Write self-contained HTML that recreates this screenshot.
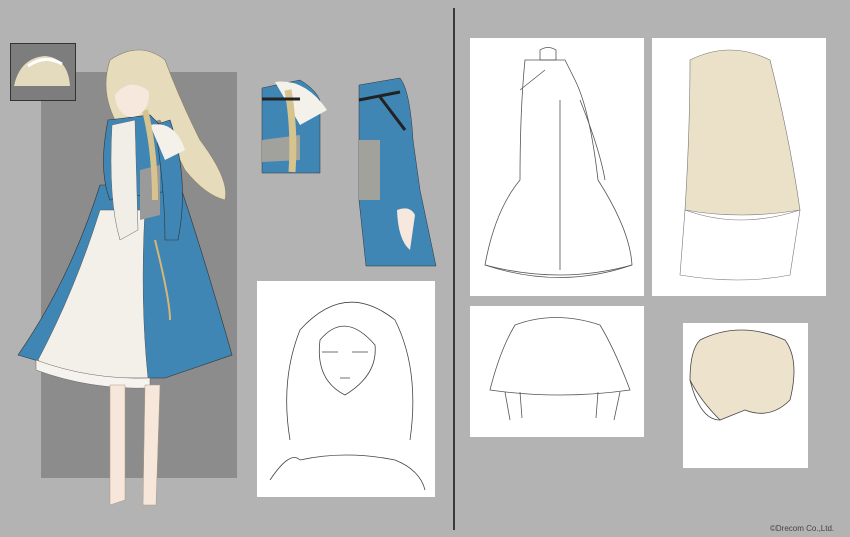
<!DOCTYPE html>
<html><head><meta charset="utf-8"><style>
html,body{margin:0;padding:0;}
body{width:850px;height:537px;background:#b3b3b3;position:relative;overflow:hidden;font-family:"Liberation Sans",sans-serif;}
.a{position:absolute;}
</style></head><body>
<div class="a" style="left:41px;top:72px;width:196px;height:406px;background:#8c8c8c"></div>
<div class="a" style="left:10px;top:43px;width:64px;height:56px;background:#7d7d7d;border:1px solid #333"></div>
<div class="a" style="left:453px;top:8px;width:2px;height:522px;background:#3a3a3a"></div>
<div class="a" style="left:257px;top:281px;width:178px;height:216px;background:#fff"></div>
<div class="a" style="left:470px;top:38px;width:174px;height:258px;background:#fff"></div>
<div class="a" style="left:652px;top:38px;width:174px;height:258px;background:#fff"></div>
<div class="a" style="left:470px;top:306px;width:174px;height:131px;background:#fff"></div>
<div class="a" style="left:683px;top:323px;width:125px;height:145px;background:#fff"></div>
<svg class="a" style="left:0;top:0" width="850" height="537" viewBox="0 0 850 537">
<!-- thumbnail hair -->
<path d="M14 86 Q20 58 45 56 Q68 58 70 86 Z" fill="#e4dbbf"/>
<path d="M28 66 Q45 54 62 64" stroke="#fff" stroke-width="3" fill="none"/>
<!-- main figure hair -->
<path d="M110 60 Q140 40 165 60 Q180 100 200 140 Q230 180 225 200 Q205 195 185 170 L160 120 Q130 130 115 120 Q100 90 110 60Z" fill="#e6dcbc" stroke="#8a7f66" stroke-width=".6"/>
<!-- skirt blue -->
<path d="M100 185 L180 185 Q205 260 232 355 L165 378 L95 378 L18 355 Q70 280 100 185Z" fill="#3f86b5" stroke="#333" stroke-width=".6"/>
<!-- white skirt -->
<path d="M100 210 L145 210 Q140 300 148 378 L95 378 Q50 372 38 360 Q75 290 100 210Z" fill="#f3f0ea" stroke="#555" stroke-width=".5"/>
<path d="M36 360 Q90 380 150 378 L150 388 Q90 390 36 370Z" fill="#f6f3ee" stroke="#666" stroke-width=".5"/>
<!-- torso -->
<path d="M108 120 L150 115 L165 130 L175 190 L110 200 Q98 170 108 120Z" fill="#3f86b5" stroke="#333" stroke-width=".6"/>
<path d="M112 125 L135 120 L138 230 L120 240 Q108 200 112 125Z" fill="#f1eee8" stroke="#666" stroke-width=".5"/>
<path d="M140 170 L160 165 L160 215 L140 220Z" fill="#9a9a9a"/>
<path d="M155 125 L170 120 Q190 180 178 240 L165 240 Q165 190 155 125Z" fill="#3f86b5" stroke="#333" stroke-width=".6"/>
<path d="M150 125 Q175 120 185 150 L165 160Z" fill="#f4f1ea"/>
<!-- braid -->
<path d="M145 110 Q155 150 155 200" stroke="#d7c38e" stroke-width="6" fill="none"/>
<!-- face -->
<ellipse cx="132" cy="95" rx="17" ry="22" fill="#f6e8dc"/>
<path d="M112 80 Q130 50 158 70 L150 92 Q130 76 115 95Z" fill="#e6dcbc"/>
<!-- legs -->
<path d="M110 385 L125 385 L125 500 L110 505Z M145 385 L160 385 L156 505 L143 505Z" fill="#f7e7da" stroke="#aa9888" stroke-width=".5"/>
<path d="M155 240 Q170 300 170 320" stroke="#d7b577" stroke-width="2" fill="none"/>
<!-- crop1 -->
<path d="M262 88 L300 80 Q325 95 320 112 L320 173 L262 173Z" fill="#3f86b5" stroke="#333" stroke-width=".5"/>
<path d="M275 82 Q305 78 327 110 L300 125 Z" fill="#f4f1ea"/>
<path d="M262 140 L300 135 L300 160 L262 162Z" fill="#a2a29c"/>
<path d="M288 90 Q295 130 292 172" stroke="#d7c38e" stroke-width="7" fill="none"/>
<path d="M262 99 L300 99" stroke="#222" stroke-width="3"/>
<!-- crop2 -->
<path d="M359 85 L400 78 Q410 90 413 140 L420 190 L436 266 L366 266 L359 200Z" fill="#3f86b5" stroke="#333" stroke-width=".5"/>
<path d="M359 140 L380 140 L380 200 L359 200Z" fill="#a2a29c"/>
<path d="M359 100 L400 92 M380 97 L405 130" stroke="#222" stroke-width="3"/>
<path d="M397 210 Q410 205 415 215 L410 250 Q398 240 397 210Z" fill="#f6e8dc"/>
<!-- face sketch -->
<g stroke="#444" stroke-width=".8" fill="none">
<path d="M290 440 Q280 380 300 330 Q345 280 395 320 Q420 370 410 440"/>
<path d="M320 340 Q345 310 375 345 Q378 375 345 395 Q315 380 320 340Z"/>
<path d="M322 352 L338 352 M352 352 L368 352 M340 378 L350 378"/>
<path d="M300 460 Q345 450 395 460 M270 480 Q290 450 300 460 M395 460 Q420 470 425 490"/>
</g>
<!-- dress back sketch -->
<g stroke="#555" stroke-width=".8" fill="none">
<path d="M525 60 L565 60 L575 80 Q590 110 598 180 Q630 230 632 265 Q560 285 485 265 Q495 210 520 180 Q520 110 525 60Z"/>
<path d="M540 50 Q548 45 556 50 L556 60 L540 60Z M520 90 L545 70 M560 100 L560 270 M485 265 Q560 290 632 265"/>
<path d="M580 100 Q600 150 605 180"/>
</g>
<!-- hair back -->
<path d="M690 60 Q730 40 770 60 Q790 140 800 210 Q740 220 685 210 Q690 130 690 60Z" fill="#ebe1c8" stroke="#777" stroke-width=".6"/>
<path d="M685 210 Q740 230 800 210 L790 275 Q740 285 680 275Z" fill="#fff" stroke="#777" stroke-width=".6"/>
<!-- hood sketch -->
<g stroke="#555" stroke-width=".8" fill="none">
<path d="M515 325 Q555 310 600 325 Q615 350 630 390 Q560 400 490 390 Q500 350 515 325Z"/>
<path d="M505 392 L510 420 M620 392 L614 420 M520 392 L522 418 M598 392 L596 418"/>
</g>
<!-- ponytail -->
<path d="M700 340 Q740 320 785 340 Q800 360 790 400 Q770 420 745 410 L720 420 Q700 400 690 380 Q690 350 700 340Z" fill="#ede3cc" stroke="#444" stroke-width=".8"/>
<path d="M690 380 Q700 420 720 420" stroke="#444" fill="none" stroke-width=".8"/>
</svg>
<div class="a" style="left:770px;top:524px;font-size:8px;color:#444">©Drecom Co.,Ltd.</div>
</body></html>
